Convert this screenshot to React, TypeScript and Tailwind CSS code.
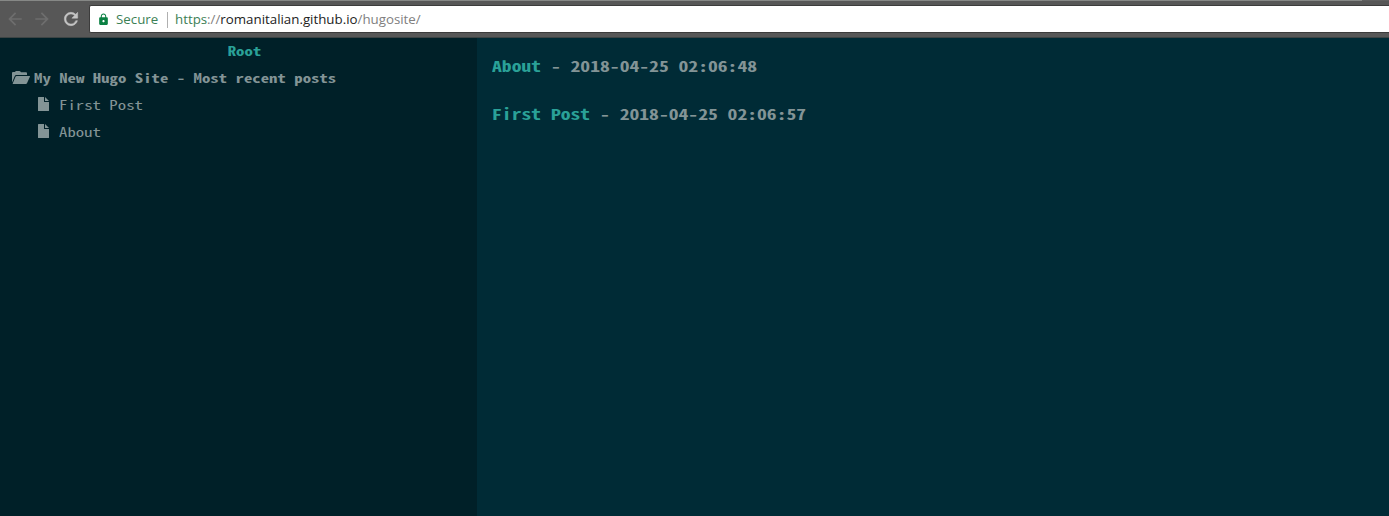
import { MdArrowBack, MdArrowForward, MdLock } from "react-icons/md";

const posts = ["First Post", "About"];

const entries = [
  { title: "About", date: "2018-04-25 02:06:48" },
  { title: "First Post", date: "2018-04-25 02:06:57" },
];

function ReloadIcon() {
  return (
    <svg
      viewBox="0 0 24 24"
      className="ml-[9px] size-5 shrink-0 fill-[#c4c4c4] stroke-[#c4c4c4] stroke-[0.6]"
    >
      <path d="M17.65 6.35A7.958 7.958 0 0 0 12 4c-4.42 0-7.99 3.58-7.99 8s3.57 8 7.99 8c3.73 0 6.84-2.55 7.73-6h-2.08A5.99 5.99 0 0 1 12 18c-3.31 0-6-2.69-6-6s2.69-6 6-6c1.66 0 3.14.69 4.22 1.78L13 11h7V4z" />
    </svg>
  );
}

function FolderIcon() {
  return (
    <svg viewBox="0 0 18 14" className="h-3.5 w-[18px] shrink-0" fill="currentColor">
      <path d="M0 11.5V2q0-1 1-1h1.8L3.3.4Q3.6 0 4.2 0h3.2q.7 0 1 .5l.6.8h5q1 0 1 1V4H4.2q-1 0-1.4 1L0 11.5Z" />
      <path d="M4.6 5h13q.6 0 .3.7l-2.8 6.4q-.4.9-1.3.9H1.2q-.7 0-.4-.7L3.5 5.8q.3-.8 1.1-.8Z" />
    </svg>
  );
}

function FileIcon() {
  return (
    <svg viewBox="0 0 11 14" className="mb-px h-3.5 w-[11px] shrink-0" fill="currentColor">
      <path d="M.6 0H6v4.4q0 .6.6.6H11v8.4q0 .6-.6.6H.6q-.6 0-.6-.6V.6Q0 0 .6 0Z" />
      <path d="M7 0 11 4H7Z" />
    </svg>
  );
}

function BrowserBar() {
  return (
    <header className="flex h-[38px] shrink-0 flex-col border-b border-[#3c4444] bg-[#575757]">
      <div className="flex h-px shrink-0 bg-[#5f5f5f]">
        <div className="w-[1362px] bg-[#868886]" />
      </div>
      <div className="mt-1 flex h-7 items-center font-['Open_Sans',sans-serif] text-[13.3px]">
        <div className="flex w-[89px] shrink-0 items-center pl-[5px]">
          <MdArrowBack className="size-5 text-[#6e6e6e]" />
          <MdArrowForward className="ml-[7px] size-5 text-[#6e6e6e]" />
          <ReloadIcon />
        </div>
        <div className="flex h-7 flex-1 items-center whitespace-pre rounded-l-xs border-y border-l border-[#3c3c3c] bg-white pl-[7px] pt-px">
          <MdLock className="size-[13px] text-[#0b8043]" />
          <span className="ml-1.5 w-[51px] text-[#3c8055]">Secure</span>
          <span className="h-4 w-px bg-[#b0b0b0]" />
          <span className="ml-[7px] text-[#3c8055]">https</span>
          <span className="text-[#808080]">://</span>
          <span className="text-[#222222]">romanitalian.github.io</span>
          <span className="text-[#808080]">/hugosite/</span>
        </div>
      </div>
    </header>
  );
}

export default function App() {
  return (
    <div className="flex h-[516px] w-[1389px] flex-col overflow-hidden bg-[#002028] font-['Noto_Sans_Mono_CJK_SC','Liberation_Mono',monospace] text-[#839496]">
      <BrowserBar />
      <div className="flex flex-1">
        <aside className="-mt-px w-[477px] shrink-0 text-[12.6px] leading-[27px]">
          <div className="origin-center scale-x-[1.3333] pl-[9px] text-center font-bold text-[#2aa198]">
            Root
          </div>
          <div className="flex items-center pl-3 font-bold">
            <FolderIcon />
            <span className="ml-1 origin-left scale-x-[1.3333]">
              My New Hugo Site - Most recent posts
            </span>
          </div>
          <ul>
            {posts.map((post) => (
              <li key={post} className="flex items-center pl-[38px]">
                <FileIcon />
                <span className="ml-2.5 origin-left scale-x-[1.3333]">{post}</span>
              </li>
            ))}
          </ul>
        </aside>
        <main className="flex-1 bg-[#002b36] pl-[15px] pt-4 text-[14.6px] font-bold leading-6">
          {entries.map((entry) => (
            <h2 key={entry.title} className="mb-6 w-80 origin-left scale-x-[1.345] whitespace-nowrap">
              <span className="text-[#2aa198]">{entry.title}</span> - {entry.date}
            </h2>
          ))}
        </main>
      </div>
    </div>
  );
}
